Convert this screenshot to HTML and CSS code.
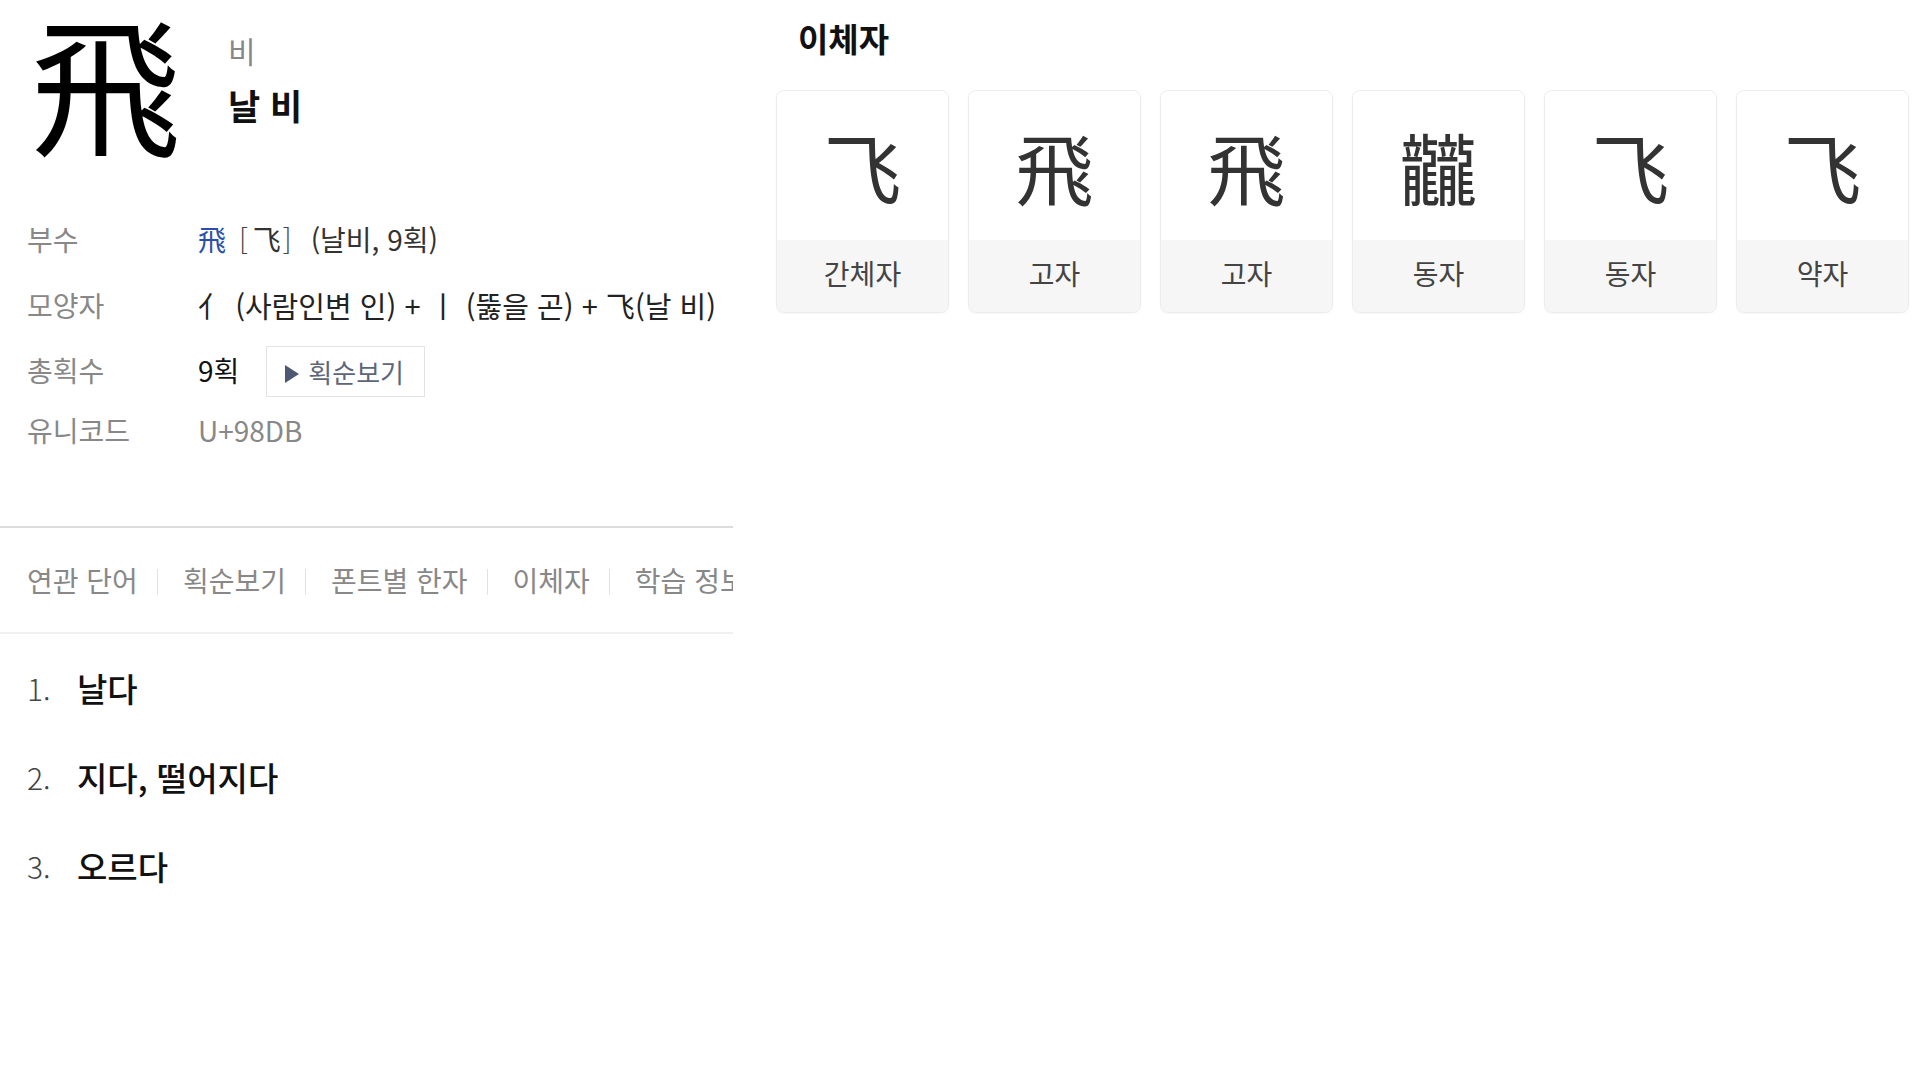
FILE: index.html
```html
<!DOCTYPE html>
<html lang="ko">
<head>
<meta charset="utf-8">
<title>飛 - 날 비</title>
<link rel="stylesheet" href="styles.css">
</head>
<body>
<div class="page">
  <section class="left">
    <header class="entry-head">
      <div class="big-char">飛</div>
      <div class="readings">
        <div class="sound">비</div>
        <div class="meaning">날 비</div>
      </div>
    </header>
    <div class="info">
      <div class="row r1">
        <div class="label">부수</div>
        <div class="value"><span class="rad">飛</span><span class="br">[</span><span class="cjk">飞</span><span class="br br-r">]</span>(날비, 9획)</div>
      </div>
      <div class="row r2">
        <div class="label">모양자</div>
        <div class="value dark"><span class="cjk">亻</span>&nbsp;(사람인변 인) +&nbsp;<span class="cjk">丨</span>&nbsp;(뚫을 곤) +&nbsp;<span class="cjk">飞</span>(날 비)</div>
      </div>
      <div class="row r3">
        <div class="label">총획수</div>
        <div class="value strong">9획 <span class="stroke-btn"><span class="tri"></span>획순보기</span></div>
      </div>
      <div class="row r4">
        <div class="label">유니코드</div>
        <div class="value muted">U+98DB</div>
      </div>
    </div>
    <nav class="tabs">
      <span class="tab">연관 단어</span>
      <span class="tab">획순보기</span>
      <span class="tab">폰트별 한자</span>
      <span class="tab">이체자</span>
      <span class="tab">학습 정보</span>
    </nav>
    <ol class="meanings">
      <li><span class="num">1.</span><span class="txt">날다</span></li>
      <li><span class="num">2.</span><span class="txt">지다, 떨어지다</span></li>
      <li><span class="num">3.</span><span class="txt">오르다</span></li>
    </ol>
  </section>
  <section class="right">
    <h2 class="title">이체자</h2>
    <div class="cards">
      <div class="card"><div class="glyph">飞</div><div class="kind">간체자</div></div>
      <div class="card"><div class="glyph">飛</div><div class="kind">고자</div></div>
      <div class="card"><div class="glyph">飛</div><div class="kind">고자</div></div>
      <div class="card"><div class="glyph">龖</div><div class="kind">동자</div></div>
      <div class="card"><div class="glyph">飞</div><div class="kind">동자</div></div>
      <div class="card"><div class="glyph">飞</div><div class="kind">약자</div></div>
    </div>
  </section>
</div>
</body>
</html>
```

FILE: styles.css
```css
* { box-sizing: border-box; }
html, body { margin: 0; padding: 0; background: #fff; }
body {
  font-family: "Noto Sans CJK KR", "Noto Sans CJK SC", sans-serif;
  color: #222;
}
.page {
  display: flex;
  align-items: flex-start;
  gap: 43px;
  width: 1920px;
}
.left { width: 733px; flex: none; }
.right { width: 1140px; flex: none; }

.entry-head {
  display: flex;
  align-items: flex-start;
  padding: 5px 0 0 31px;
  gap: 47px;
}
.big-char {
  font-family: "Noto Sans CJK SC", sans-serif;
  font-size: 150px;
  line-height: 150px;
  width: 150px;
  color: #000;
}
.readings { padding-top: 27px; }
.sound { font-size: 30px; line-height: 36px; color: #888; }
.meaning { font-size: 35px; line-height: 42px; font-weight: 700; color: #111; margin-top: 16px; }

.info {
  margin-top: 51px;
  padding-left: 27px;
  display: flex;
  flex-direction: column;
}
.row {
  display: flex;
  align-items: center;
}
.r1 { height: 66px; }
.r2 { height: 66px; }
.r3 { height: 64px; }
.r4 { height: 56px; }
.label { width: 171px; flex: none; font-size: 28px; color: #888; }
.value { font-size: 28px; color: #333; display: flex; align-items: center; white-space: nowrap; }
.value.dark { color: #222; font-size: 29px; }
.value.strong { color: #111; }
.value.muted { color: #888; }
.cjk { font-family: "Noto Sans CJK SC", sans-serif; }
.rad { font-family: "Noto Sans CJK SC", sans-serif; color: #2a4fa8; }
.br { font-weight: 300; color: #444; margin: 0 5px 0 13px; }
.br-r { margin: 0 19px 0 2px; }
.stroke-btn {
  display: inline-flex;
  align-items: center;
  height: 51px;
  margin-left: 27px;
  margin-top: 3px;
  padding: 0 20px 0 18px;
  border: 1px solid #e3e3e3;
  color: #5c6678;
  font-size: 26px;
}
.tri {
  width: 0; height: 0;
  border-left: 14px solid #4d5874;
  border-top: 9px solid transparent;
  border-bottom: 9px solid transparent;
  margin-right: 9px;
  margin-top: 5px;
}

.tabs {
  margin-top: 68px;
  height: 108px;
  border-top: 2px solid #dcdcdc;
  border-bottom: 2px solid #f1f1f1;
  display: flex;
  align-items: center;
  padding-left: 27px;
  overflow: hidden;
  white-space: nowrap;
}
.tab {
  font-size: 28px;
  color: #888;
  flex: none;
  display: flex;
  align-items: center;
}
.tab + .tab::before {
  content: "";
  display: block;
  width: 1px;
  height: 26px;
  background: #e2e2e2;
  margin: 4px 25px 0 19px;
}

.meanings { list-style: none; margin: 0; padding: 0 0 0 27px; }
.meanings li {
  display: flex;
  align-items: center;
  height: 89px;
  font-size: 33px;
}
.meanings li:first-child { margin-top: 9px; }
.num { width: 50px; color: #444; font-weight: 300; font-size: 30px; }
.txt { color: #111; font-weight: 500; }

.title {
  margin: 0;
  padding: 18px 0 0 22px;
  font-size: 33px;
  line-height: 40px;
  font-weight: 700;
  color: #111;
}
.cards {
  display: flex;
  gap: 19px;
  margin-top: 32px;
}
.card {
  width: 173px;
  height: 223px;
  border: 1px solid #ececec;
  border-radius: 8px;
  overflow: hidden;
  display: flex;
  flex-direction: column;
  box-shadow: 0 1px 2px rgba(0,0,0,0.04);
}
.glyph {
  height: 149px;
  display: flex;
  align-items: center;
  justify-content: center;
  font-family: "Noto Sans CJK SC", "Noto Sans CJK TC", "Noto Sans CJK JP", sans-serif;
  font-size: 78px;
  color: #333;
  background: #fff;
}
.kind {
  flex: 1;
  display: flex;
  align-items: center;
  justify-content: center;
  padding-bottom: 6px;
  background: #f6f6f6;
  font-size: 28px;
  color: #444;
}
```
